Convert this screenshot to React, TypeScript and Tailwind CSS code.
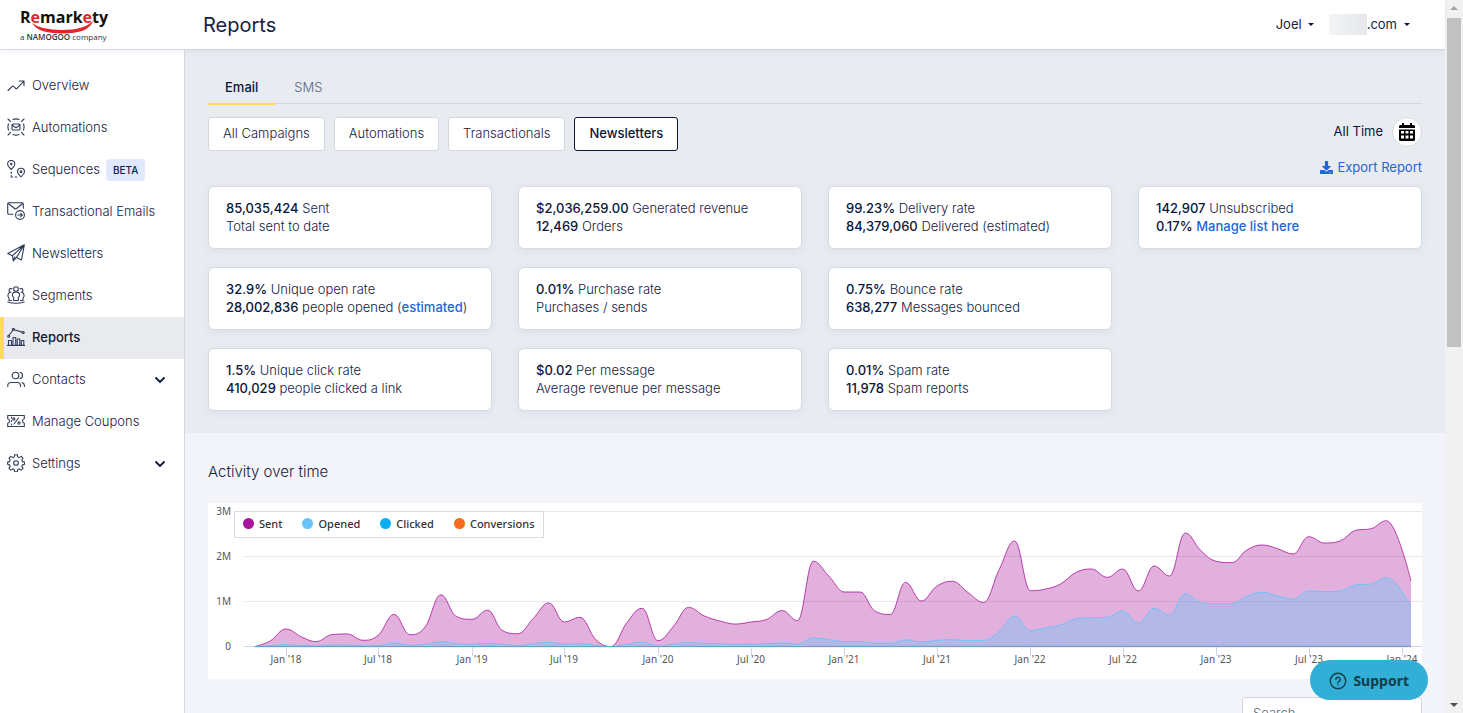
import type { ReactNode } from 'react';
import { FaDownload } from 'react-icons/fa';

const SENT = [
  10, 135, 400, 220, 120, 275, 290, 150, 260, 725, 275, 445, 1160, 680, 615, 820, 370, 295, 630, 980, 555, 660, 165, 10,
  540, 860, 140, 465, 880, 690, 580, 510, 555, 610, 810, 585, 1905, 1580, 1222, 1222, 805, 725, 1437, 1022, 1348, 1460,
  1207, 992, 1726, 2356, 1252, 1290, 1400, 1660, 1733, 1548, 1733, 1245, 1800, 1578, 2533, 2148, 1904, 1874, 2148, 2267,
  2185, 2067, 2452, 2311, 2356, 2593, 2630, 2807, 1467,
];

const OPENED = [
  12, 30, 50, 30, 30, 44, 44, 30, 30, 90, 37, 60, 120, 74, 67, 82, 60, 30, 74, 104, 67, 74, 37, 10, 60, 110, 22, 67, 96,
  82, 74, 67, 67, 74, 89, 67, 200, 163, 119, 119, 82, 82, 163, 111, 148, 163, 141, 148, 348, 689, 363, 430, 489, 630,
  652, 659, 800, 533, 859, 711, 1185, 985, 963, 963, 1126, 1215, 1133, 1067, 1244, 1230, 1244, 1378, 1400, 1541, 904,
];

const CLICKED = SENT.map(v => (v > 700 ? 18 : 10));
const CONVERSIONS = SENT.map(() => 1);

const DAY = 86400000;
const START = Date.UTC(2018, 0, 1);
const BASE = 144;
const PER_THOUSAND = 0.045;

const xAt = (time: number) => 78 + ((time - START) / DAY) * 0.5095;
const yAt = (value: number) => BASE - value * PER_THOUSAND;

// one point a month from November 2017, the last one is mid January 2024
const pointTime = (i: number, count: number) =>
  i === count - 1 ? Date.UTC(2024, 0, 18) : Date.UTC(2017, 10 + i, 1);

function spline(values: number[]) {
  const pts = values.map((v, i) => ({ x: xAt(pointTime(i, values.length)), y: yAt(v) }));
  let d = `M${pts[0].x} ${pts[0].y}`;
  let out = pts[0];
  for (let i = 1; i < pts.length; i++) {
    const last = pts[i - 1];
    const p = pts[i];
    const next = pts[i + 1];
    let left = { ...p };
    let right = { ...p };
    if (next) {
      left = { x: (1.5 * p.x + last.x) / 2.5, y: (1.5 * p.y + last.y) / 2.5 };
      right = { x: (1.5 * p.x + next.x) / 2.5, y: (1.5 * p.y + next.y) / 2.5 };
      const fix = ((right.y - left.y) * (right.x - p.x)) / (right.x - left.x) + p.y - right.y;
      left.y += fix;
      right.y += fix;
      // keep the curve from overshooting its neighbours
      if (left.y > last.y && left.y > p.y) {
        left.y = Math.max(last.y, p.y);
        right.y = 2 * p.y - left.y;
      } else if (left.y < last.y && left.y < p.y) {
        left.y = Math.min(last.y, p.y);
        right.y = 2 * p.y - left.y;
      }
      if (right.y > next.y && right.y > p.y) {
        right.y = Math.max(next.y, p.y);
        left.y = 2 * p.y - right.y;
      } else if (right.y < next.y && right.y < p.y) {
        right.y = Math.min(next.y, p.y);
        left.y = 2 * p.y - right.y;
      }
    }
    d += `C${out.x} ${out.y} ${left.x} ${left.y} ${p.x} ${p.y}`;
    out = right;
  }
  return { line: d, area: `${d}V${BASE}H${pts[0].x}Z` };
}

const SERIES = [
  { name: 'Sent', color: '#a9169c', fill: 0.34, line: 0.8, path: spline(SENT) },
  { name: 'Opened', color: '#66c4fa', fill: 0.37, line: 0.9, path: spline(OPENED) },
  { name: 'Clicked', color: '#0cadf2', fill: 0.3, line: 0.4, path: spline(CLICKED) },
  { name: 'Conversions', color: '#f76b1c', fill: 0.3, line: 0.3, path: spline(CONVERSIONS) },
];

const TICKS = Array.from({ length: 13 }, (_, i) => ({
  x: Math.round(xAt(Date.UTC(2018, i * 6, 1))),
  label: `${i % 2 ? 'Jul' : 'Jan'} '${18 + Math.floor(i / 2)}`,
}));

function Icon({ children }: { children: ReactNode }) {
  return (
    <svg
      className="mb-[3px] h-[18px] w-[18px] shrink-0"
      viewBox="0 0 18 18"
      fill="none"
      stroke="#323c5c"
      strokeWidth="1.1"
      strokeLinecap="round"
      strokeLinejoin="round"
      aria-hidden="true"
    >
      {children}
    </svg>
  );
}

const NAV = [
  { label: 'Overview', icon: <path d="M1 14.500 5 10.600q1-.9 1.800 0l1.700 1.700q1 .8 1.800-.1L17 5M12.300 5H17v4.700" /> },
  {
    label: 'Automations',
    icon: (
      <>
        <rect x="5" y="6" width="8" height="6" rx="1" />
        <path d="m5.300 7.200 3.700 2.600 3.700-2.600" />
        <path d="M6 1.500q3-1.200 6 0M6 16.500q3 1.200 6 0M1.500 6q-1.200 3 0 6M16.500 6q1.200 3 0 6" />
        <path d="m1 1 2.600 2.600M17 1l-2.600 2.600M1 17l2.600-2.600M17 17l-2.600-2.600" />
      </>
    ),
  },
  {
    label: 'Sequences',
    badge: 'BETA',
    icon: (
      <>
        <path d="M4.200 9.500C1.800 7 .6 5.600.6 4a3.600 3.600 0 0 1 7.200 0c0 1.600-1.200 3-3.600 5.500Z" />
        <circle cx="4.200" cy="4" r=".7" />
        <path d="M14 16.800c-2.400-2.200-3.500-3.500-3.500-5a3.500 3.500 0 0 1 7 0c0 1.500-1.100 2.800-3.500 5Z" />
        <circle cx="14" cy="11.800" r=".9" />
        <path d="M4.200 12v1.500M4.200 15.500v1.500h1.300M8 17h1.800" />
      </>
    ),
  },
  {
    label: 'Transactional Emails',
    icon: (
      <>
        <path d="M6 12.200H2q-1.300 0-1.300-1.300V2Q.7.800 2 .8h13Q16.300.8 16.300 2v4.200M1 1.200l6.500 5.300q1 .8 2 0L16 1.200" />
        <circle cx="13" cy="13" r="4.400" />
        <path d="M10.800 13h4.300M13.600 11.300l1.700 1.700-1.700 1.700" />
      </>
    ),
  },
  {
    label: 'Newsletters',
    icon: <path d="M17.300.8.8 9.500l4.700 2.200L17.300.8 14.500 16l-5-2.600L17.300.8M5.500 11.700l.8 5.300 3.200-3.600M6.300 17l1.500-4" />,
  },
  {
    label: 'Segments',
    icon: (
      <>
        <circle cx="9" cy="3" r="2.300" />
        <path d="M6.700 14.500v-3L5.500 10V8q.3-2 3.500-2t3.500 2v2l-1.200 1.500v3H6.700Z" />
        <path d="M5 2.800a1.900 1.900 0 1 0-1 3.500M2.800 6.500Q1 7 1 9v1.500L2 12v2.500h2.500M13 2.800a1.900 1.900 0 1 1 1 3.500M15.200 6.500Q17 7 17 9v1.500L16 12v2.500h-2.500" />
        <path d="M.8 16q8.200 2.600 16.400 0" />
      </>
    ),
  },
  {
    label: 'Reports',
    active: true,
    icon: (
      <>
        <path d="M.5 17.400h17M1.500 17v-4.500h3V17M6 17V9.500h2.700V17M10.200 17v-6h2.600v6M14.300 17v-4.500h2.500V17" />
        <path d="M2 7.500 5.800 2.300M7.200 1.700l8 2.400" />
        <circle cx="1.700" cy="8.200" r="1" />
        <circle cx="6.400" cy="1.500" r="1" />
        <circle cx="16.200" cy="4.500" r="1" />
      </>
    ),
  },
  {
    label: 'Contacts',
    expandable: true,
    icon: (
      <>
        <circle cx="8.500" cy="5.500" r="3.300" />
        <path d="M.8 16.500v-1q0-3 3.200-3h6.500q3 0 3 3v1M13 2.300a3.300 3.300 0 0 1 0 6.400M15.200 12.600q2.200.6 2.200 3v.9" />
      </>
    ),
  },
  {
    label: 'Manage Coupons',
    icon: (
      <>
        <path d="M.7 3.500h16.600v3.200q-1.800.3-1.800 2.300t1.800 2.300v3.200H.7v-3.200q1.800-.3 1.800-2.300T.7 6.700V3.500Z" />
        <path d="m7 12 4.500-6M4.500 5v1M4.500 8.500v1M4.500 12v1" />
        <circle cx="6.800" cy="7" r="1.100" />
        <circle cx="12" cy="11" r="1.100" />
      </>
    ),
  },
  {
    label: 'Settings',
    expandable: true,
    icon: (
      <>
        <circle cx="9" cy="9" r="2.300" />
        <path d="M7.700.8h2.600l.5 2.200 1.500.6 1.900-1.200 1.800 1.800-1.200 1.900.6 1.500 2.200.5v2.200l-2.200.6-.6 1.500 1.200 1.900-1.800 1.800-1.900-1.200-1.500.6-.5 2.200H7.700l-.5-2.200-1.500-.6-1.900 1.200L2 14.300l1.200-1.900-.6-1.500-2-.6V8.100l2-.5.6-1.500L2 4.200l1.800-1.800 1.900 1.200L7.200 3 7.700.8Z" />
      </>
    ),
  },
];

const FILTERS = ['All Campaigns', 'Automations', 'Transactionals', 'Newsletters'];

function Num({ children }: { children: ReactNode }) {
  return <span className="font-medium text-[#0c1638]">{children}</span>;
}

function TextLink({ children }: { children: ReactNode }) {
  return (
    <a href="#" className="font-medium text-[#2067d6]">
      {children}
    </a>
  );
}

function StatCard({ children }: { children: ReactNode }) {
  return (
    <div className="rounded-md border border-[#d6dae1] bg-white px-[17px] pt-3 pb-[13px] leading-[18px] whitespace-nowrap shadow-[0_2px_6px_rgba(180,200,225,0.25)]">
      {children}
    </div>
  );
}

function Logo() {
  return (
    <svg
      className="h-[38px] w-[96px]"
      viewBox="0 0 96 38"
      fontFamily='"Open Sans", "Noto Sans", sans-serif'
      role="img"
      aria-label="Remarkety, a Namogoo company"
    >
      <path d="M12 17q9 7 30 7 22 0 31-9-4 12.500-31 12.500-24 0-30-10.500Z" fill="#e3262b" />
      <text x="0" y="17" fontSize="16" fontWeight="700" fill="#111">
        R<tspan fill="#e3262b">e</tspan>mark<tspan fill="#e3262b">e</tspan>ty
      </text>
      <text x="0" y="34" fontSize="8" fill="#333">
        a <tspan fontWeight="600">NAMOGOO</tspan> company
      </text>
    </svg>
  );
}

function Sidebar() {
  return (
    <nav className="w-[185px] shrink-0 border-r border-[#d3d8e0] bg-white pt-[15px]">
      {NAV.map(item => (
        <a
          key={item.label}
          href="#"
          className={
            item.active
              ? 'flex h-[42px] items-center border-l-4 border-[#ffdb57] bg-[#e8eaee] pr-[18px] pl-[3px] font-medium text-[#0c1638]'
              : 'flex h-[42px] items-center pr-[18px] pl-[7px] font-light text-[#16203f]'
          }
        >
          <Icon>{item.icon}</Icon>
          <span className="ml-[7px] whitespace-nowrap">{item.label}</span>
          {item.badge && (
            <span className="ml-[6px] rounded bg-[#dfe8fd] px-[7px] py-[3px] text-[10px] leading-4 font-medium">
              {item.badge}
            </span>
          )}
          {item.expandable && (
            <svg className="ml-auto h-3 w-3" viewBox="0 0 12 12" fill="none" stroke="#0c1638" strokeWidth="1.800">
              <path d="m1.500 3.500 4.500 4.500 4.500-4.500" />
            </svg>
          )}
        </a>
      ))}
    </nav>
  );
}

function ActivityChart() {
  return (
    <div className="relative bg-white">
      <svg
        className="block w-full"
        viewBox="0 0 1214 176"
        fontFamily='"Noto Sans", "Open Sans", sans-serif'
        fontSize="10"
        fill="#555"
      >
        {[0, 1, 2, 3].map(m => (
          <g key={m}>
            <rect x="36" y={Math.round(yAt(m * 1000)) - 1} width="1178" height="1" fill={m ? '#e8e8ea' : '#ccd6eb'} />
            <text x="23" y={Math.round(yAt(m * 1000)) + 3} textAnchor="end">
              {m ? `${m}M` : '0'}
            </text>
          </g>
        ))}
        {SERIES.map(s => (
          <g key={s.name}>
            <path d={s.path.area} fill={s.color} fillOpacity={s.fill} />
            <path d={s.path.line} fill="none" stroke={s.color} strokeOpacity={s.line} />
          </g>
        ))}
        {TICKS.map(t => (
          <g key={t.label}>
            <rect x={t.x} y="144" width="1" height="9" fill="#ccd6eb" />
            <text x={t.x} y="160" textAnchor="middle">
              {t.label}
            </text>
          </g>
        ))}
      </svg>
      <ul className="absolute top-2 left-[26px] flex gap-5 border border-[#dcdcdc] bg-white px-2 pt-[3px] pb-[5px] font-['Noto_Sans','Open_Sans',sans-serif] text-[11px] leading-[17px] font-medium text-[#333]">
        {SERIES.map(s => (
          <li key={s.name} className="flex items-center gap-[5px]">
            <span className="h-[11px] w-[11px] rounded-full" style={{ backgroundColor: s.color }} />
            {s.name}
          </li>
        ))}
      </ul>
    </div>
  );
}

function Caret() {
  return <span className="h-0 w-0 border-x-[3px] border-t-[3px] border-x-transparent border-t-[#0c1638]" />;
}

export default function App() {
  return (
    <div className="relative flex h-screen overflow-hidden bg-[#f3f4f9] font-['Inter',sans-serif] text-[13px] text-[#16203f]">
      <div className="flex min-w-0 flex-1 flex-col">
        <header className="z-10 flex h-[50px] shrink-0 items-center border-b border-[#d3d8e0] bg-white pr-[35px] shadow-[0_2px_5px_rgba(160,180,210,0.15)]">
          <a href="#" className="w-[203px] pl-5">
            <Logo />
          </a>
          <h1 className="text-xl">Reports</h1>
          <button type="button" className="ml-auto flex items-center gap-[6px]">
            Joel <Caret />
          </button>
          <button type="button" className="ml-[15px] flex items-center gap-[7px]">
            <span className="flex items-center">
              <span className="h-[21px] w-[38px] bg-linear-to-r from-[#f3f4f6] to-[#e6e7ea]" />
              .com
            </span>
            <Caret />
          </button>
        </header>

        <div className="flex min-h-0 flex-1">
          <Sidebar />
          <main className="min-w-0 flex-1 overflow-hidden">
            <section className="bg-[#e8ebf0] px-[23px] pt-[19px] pb-[22px]">
              <div role="tablist" className="flex h-[35px] border-b border-[#d3d8e0]">
                <button
                  type="button"
                  role="tab"
                  aria-selected="true"
                  className="h-9 border-b-2 border-[#ffdb57] px-[17px] pt-[3px] font-medium text-[#0c1638]"
                >
                  Email
                </button>
                <button type="button" role="tab" aria-selected="false" className="px-[19px] pt-1 font-light text-[#5d6678]">
                  SMS
                </button>
              </div>

              <div className="mt-[13px] flex items-center gap-[9px]">
                {FILTERS.map(name => (
                  <button
                    key={name}
                    type="button"
                    className={
                      name === 'Newsletters'
                        ? 'h-[34px] rounded-[3px] border border-[#0c1638] bg-white px-[14px] font-medium text-[#0c1638]'
                        : 'h-[34px] rounded-[3px] border border-[#d3d8e0] bg-white px-[14px] font-light'
                    }
                  >
                    {name}
                  </button>
                ))}
                <div className="ml-auto flex items-center gap-[9px] self-start">
                  <span className="text-[#0c1638]">All Time</span>
                  <button
                    type="button"
                    aria-label="Choose dates"
                    className="flex h-[30px] w-[30px] items-center justify-center rounded-full border border-[#d3d8e0] bg-white text-black"
                  >
                    <svg className="h-[18px] w-4" viewBox="0 0 16 18" aria-hidden="true">
                      <path
                        d="M3 0h2v2h6V0h2v2h1.500Q16 2 16 3.500V5H0V3.500Q0 2 1.500 2H3ZM0 6.500h16v10q0 1.500-1.500 1.500h-13Q0 18 0 16.500ZM2 8v2.500h3V8ZM6.500 8v2.500h3V8ZM11 8v2.500h3V8ZM2 12.500V15.500h3v-3ZM6.500 12.500v3h3v-3ZM11 12.500v3h3v-3Z"
                        fill="currentColor"
                        fillRule="evenodd"
                      />
                    </svg>
                  </button>
                </div>
              </div>

              <div className="mt-[7px] flex justify-end">
                <a href="#" className="flex items-center gap-1 leading-[18px] text-[#2067d6]">
                  <FaDownload className="h-[13px] w-[13px]" />
                  Export Report
                </a>
              </div>

              <div className="mt-[10px] grid grid-cols-4 gap-x-[26px] gap-y-[18px] font-light">
                <StatCard>
                  <p><Num>85,035,424</Num> Sent</p>
                  <p>Total sent to date</p>
                </StatCard>
                <StatCard>
                  <p><Num>$2,036,259.00</Num> Generated revenue</p>
                  <p><Num>12,469</Num> Orders</p>
                </StatCard>
                <StatCard>
                  <p><Num>99.23%</Num> Delivery rate</p>
                  <p><Num>84,379,060</Num> Delivered (estimated)</p>
                </StatCard>
                <StatCard>
                  <p><Num>142,907</Num> Unsubscribed</p>
                  <p><Num>0.17%</Num> <TextLink>Manage list here</TextLink></p>
                </StatCard>
                <StatCard>
                  <p><Num>32.9%</Num> Unique open rate</p>
                  <p><Num>28,002,836</Num> people opened (<TextLink>estimated</TextLink>)</p>
                </StatCard>
                <StatCard>
                  <p><Num>0.01%</Num> Purchase rate</p>
                  <p>Purchases / sends</p>
                </StatCard>
                <StatCard>
                  <p><Num>0.75%</Num> Bounce rate</p>
                  <p><Num>638,277</Num> Messages bounced</p>
                </StatCard>
                <div />
                <StatCard>
                  <p><Num>1.5%</Num> Unique click rate</p>
                  <p><Num>410,029</Num> people clicked a link</p>
                </StatCard>
                <StatCard>
                  <p><Num>$0.02</Num> Per message</p>
                  <p>Average revenue per message</p>
                </StatCard>
                <StatCard>
                  <p><Num>0.01%</Num> Spam rate</p>
                  <p><Num>11,978</Num> Spam reports</p>
                </StatCard>
              </div>
            </section>

            <section className="px-[23px] pt-[27px]">
              <h2 className="mb-[19px] text-[15px] leading-6 font-light">Activity over time</h2>
              <ActivityChart />
              <input
                type="search"
                aria-label="Search"
                placeholder="Search..."
                className="mt-[18px] ml-auto block h-8 w-[180px] rounded-[3px] border border-[#d3d8e0] bg-white px-[10px] font-light placeholder:text-[#5d6678]"
              />
            </section>
          </main>
        </div>
      </div>

      <div className="flex w-[18px] shrink-0 flex-col items-center justify-between bg-[#f1f1f1] py-[6px]" aria-hidden="true">
        <div className="flex flex-col items-center gap-2">
          <span className="h-0 w-0 border-x-4 border-b-4 border-x-transparent border-b-[#a3a3a3]" />
          <span className="h-[329px] w-[14px] bg-[#c1c1c1]" />
        </div>
        <span className="h-0 w-0 border-x-4 border-t-4 border-x-transparent border-t-[#505050]" />
      </div>

      <button
        type="button"
        className="absolute right-[35px] bottom-[13px] z-20 flex h-10 items-center gap-[6px] rounded-full bg-[#31afd6] px-[19px] pt-[2px] font-['Noto_Sans','Open_Sans',sans-serif] text-sm font-bold text-[#173c49]"
      >
        <svg className="h-[18px] w-[18px]" viewBox="0 0 20 20" fill="none" stroke="currentColor" strokeWidth="1.600" strokeLinecap="round">
          <circle cx="10" cy="10" r="8.600" />
          <path d="M7.600 8.200a2.400 2.400 0 1 1 3.600 2.100q-1.200.7-1.200 1.700M10 14.400v.1" />
        </svg>
        Support
      </button>
    </div>
  );
}
